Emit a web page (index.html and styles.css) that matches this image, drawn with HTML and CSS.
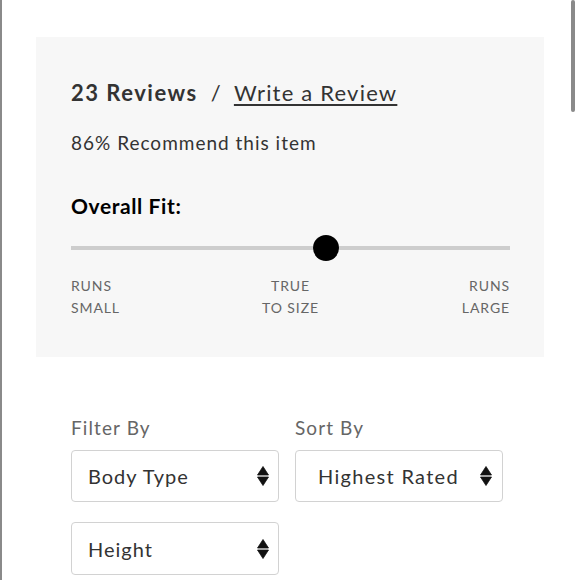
FILE: index.html
```html
<!DOCTYPE html>
<html>
<head>
<meta charset="utf-8">
<link rel="stylesheet" href="styles.css">
</head>
<body>
<div class="page">
  <section class="summary">
    <h2 class="title"><span class="count">23 Reviews</span><span class="sep">/</span><a class="write" href="#">Write a Review</a></h2>
    <p class="recommend">86% Recommend this item</p>
    <h3 class="fit-title">Overall Fit:</h3>
    <div class="slider"><div class="track"></div><div class="thumb"></div></div>
    <div class="fit-labels">
      <span class="fl left">RUNS<br>SMALL</span>
      <span class="fl mid">TRUE<br>TO SIZE</span>
      <span class="fl right">RUNS<br>LARGE</span>
    </div>
  </section>
  <section class="filters">
    <div class="field">
      <div class="label">Filter By</div>
      <div class="select"><span class="val">Body Type</span>
        <svg class="arr" width="12" height="22" viewBox="0 0 12 22"><path d="M6 1.5 L11.5 10 L0.5 10 Z M0.5 12 L11.5 12 L6 20.5 Z" fill="#111" stroke="#111" stroke-width="0.8" stroke-linejoin="round"/></svg></div>
    </div>
    <div class="field">
      <div class="label">Sort By</div>
      <div class="select sort"><span class="val">Highest Rated</span>
        <svg class="arr" width="12" height="22" viewBox="0 0 12 22"><path d="M6 1.5 L11.5 10 L0.5 10 Z M0.5 12 L11.5 12 L6 20.5 Z" fill="#111" stroke="#111" stroke-width="0.8" stroke-linejoin="round"/></svg></div>
    </div>
    <div class="field">
      <div class="select tall"><span class="val">Height</span>
        <svg class="arr" width="12" height="22" viewBox="0 0 12 22"><path d="M6 1.5 L11.5 10 L0.5 10 Z M0.5 12 L11.5 12 L6 20.5 Z" fill="#111" stroke="#111" stroke-width="0.8" stroke-linejoin="round"/></svg></div>
    </div>
  </section>
</div>
<div class="scrollbar"></div>
</body>
</html>
```

FILE: styles.css
```css
html, body { margin: 0; padding: 0; background: #fff; }
body { font-family: Lato, "Noto Sans", sans-serif; color: #333; }
.page {
  border-left: 2px solid #8a8a8a;
  min-height: 580px;
  box-sizing: border-box;
  padding: 37px 36px 0 34px;
  width: 580px;
}
.summary {
  background: #f7f7f7;
  padding: 41px 34px 38px 35px;
}
.title { margin: 0; font-size: 22px; line-height: 30px; font-weight: 700; color: #333; display: flex; align-items: baseline; letter-spacing: 1.2px; }
.count { letter-spacing: 1.5px; }
.sep { font-weight: 400; margin: 0 12px 0 13px; }
.write { font-weight: 400; color: #333; text-decoration: underline; text-underline-offset: 3px; text-decoration-thickness: 1.5px; }
.recommend { margin: 23px 0 0; font-size: 19px; line-height: 24px; color: #333; letter-spacing: 1px; }
.fit-title { margin: 38px 0 0; font-size: 21px; line-height: 26px; font-weight: 700; color: #000; letter-spacing: 0.6px; }
.slider { position: relative; height: 26px; margin-top: 16px; }
.track { position: absolute; left: 0; right: 0; top: 11px; height: 4px; background: #cdcdcd; }
.thumb { position: absolute; left: 242px; top: 0; width: 26px; height: 26px; border-radius: 50%; background: #000; }
.fit-labels { display: grid; grid-template-columns: 1fr auto 1fr; margin-top: 14px; }
.fl { font-size: 14px; line-height: 22px; color: #666; letter-spacing: 0.9px; }
.fl.mid { text-align: center; }
.fl.right { text-align: right; }
.filters {
  display: grid;
  grid-template-columns: 208px 208px;
  column-gap: 16px;
  row-gap: 20px;
  padding-left: 35px;
  margin-top: 59px;
}
.label { font-size: 19px; line-height: 24px; color: #666; margin-bottom: 10px; letter-spacing: 1.1px; }
.select {
  height: 52px;
  box-sizing: border-box;
  border: 1.5px solid #d2d2d2;
  border-radius: 4px;
  background: #fff;
  display: flex;
  align-items: center;
  justify-content: space-between;
  padding: 0 9px 0 16px;
}
.select.sort { padding-left: 22px; padding-right: 10px; }
.select.tall { height: 53px; }
.val { font-size: 20px; color: #333; letter-spacing: 1px; }
.select.sort .val { letter-spacing: 1.3px; }
.arr { display: block; }
.scrollbar {
  position: fixed; left: 571px; top: 0; width: 4px; height: 112px;
  background: #8a8a8a; border-radius: 2px;
}
```
